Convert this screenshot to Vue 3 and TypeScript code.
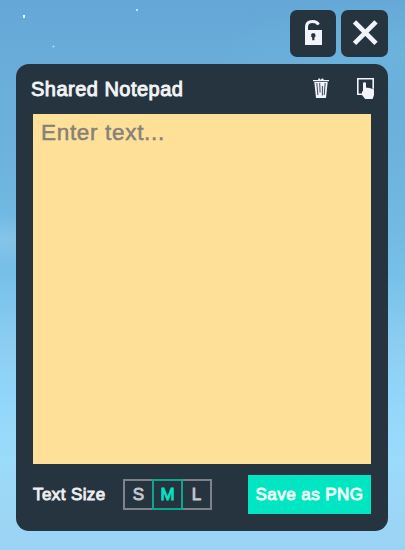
<script setup lang="ts">
import { ref } from 'vue'

type Size = 'S' | 'M' | 'L'

const sizes: Size[] = ['S', 'M', 'L']
const active = ref<Size>('M')
const locked = ref(false)
const note = ref('')
</script>

<template>
  <main class="scene">
    <svg class="stars" width="405" height="64" aria-hidden="true">
      <rect x="23" y="15" width="2" height="3" fill="#e4ffff" />
      <rect x="136" y="9" width="2" height="2" fill="#b5ecf8" />
      <rect x="53" y="46" width="1" height="1" fill="#e4ffff" />
      <path d="M52 46.5h3M53.500 45v3" stroke="#9ddcf2" stroke-opacity=".6" />
    </svg>

    <div class="window-controls">
      <button class="control lock" type="button" aria-label="Lock" @click="locked = !locked">
        <svg width="46" height="47" viewBox="0 0 46 47">
          <path d="M16.500 20.500v-3.500c0-3.600 2.500-5.500 6-5.500 3.200 0 5 1 6 3.200" fill="none" stroke="#f3f3fb" stroke-width="3" />
          <path fill="#f3f3fb" fill-rule="evenodd" d="M15 20h17v15H15zM21.200 24.200v2.600l1 .8v2.700h2.200v-2.700l1-.8v-2.600l-1.100-1h-2z" />
        </svg>
      </button>
      <button class="control close" type="button" aria-label="Close">
        <svg width="47" height="47" viewBox="0 0 47 47">
          <path d="M13.500 11.800l21.500 21.500M35 11.800L13.500 33.300" stroke="#f3f3fb" stroke-width="4.700" />
        </svg>
      </button>
    </div>

    <section class="notepad">
      <header class="header">
        <h1 class="title">Shared Notepad</h1>
        <div class="tools">
          <button class="tool" type="button" aria-label="Clear" @click="note = ''">
            <svg width="18" height="22" viewBox="0 0 18 22">
              <path fill="#f3f3fb" d="M1 2h5l.5-1.500h1.500V1.500h1.500V0.500H11L12 2h5v1.300H1zM2.300 4h13.400L14 20H4z" />
              <path d="M4.800 5l1.100 12M7.700 5l.4 9.500M10.400 8v9.500M13.200 5l-1 12" stroke="#25343e" stroke-width=".9" />
            </svg>
          </button>
          <button class="tool" type="button" aria-label="Select">
            <svg width="18" height="22" viewBox="0 0 18 22">
              <path d="M5 16.200H.8V.8h15.400v10" fill="none" stroke="#f3f3fb" stroke-width="1.600" />
              <path fill="#f3f3fb" d="M6 5.500q0-1.200 1.500-1.200t1.500 1.200v4.300q1-.6 2 .1 1-.4 2 .4 1-.3 2 .6 1.800-.4 2 1v5l-1.400 4.100H8.200L5 17v-3.800l1 .3z" />
            </svg>
          </button>
        </div>
      </header>

      <textarea v-model="note" class="note" placeholder="Enter text..." :readonly="locked"></textarea>

      <footer class="footer">
        <span class="label">Text Size</span>
        <div class="sizes">
          <button
            v-for="size in sizes"
            :key="size"
            type="button"
            class="size"
            :class="{ active: size === active }"
            @click="active = size"
          >{{ size }}</button>
        </div>
        <button class="save" type="button">Save as PNG</button>
      </footer>
    </section>
  </main>
</template>

<style>
body {
  margin: 0;
}
</style>

<style scoped>
.scene {
  position: relative;
  box-sizing: border-box;
  width: 405px;
  height: 550px;
  padding: 10px 17px 19px 16px;
  overflow: hidden;
  display: flex;
  flex-direction: column;
  font-family: "Liberation Sans", Arial, sans-serif;
  background:
    radial-gradient(ellipse 60px 26px at 0 240px, rgba(155, 207, 235, 0.5), transparent),
    radial-gradient(ellipse 190px 55px at 405px 55px, rgba(108, 183, 221, 0.7), transparent),
    linear-gradient(180deg, #65a8d7 0, #69acda 60px, #6fb5e1 190px, #76c0e8 275px, #8bcdf1 340px, #91d6fa 395px, #9bdbfb 460px, #9bd3f4 550px);
}

.stars {
  position: absolute;
  top: 0;
  left: 0;
}

button {
  padding: 0;
  border: 0;
  font-family: inherit;
  background: none;
}

svg {
  display: block;
}

.window-controls {
  position: relative;
  display: flex;
  justify-content: flex-end;
  gap: 5px;
  height: 47px;
  margin-bottom: 7px;
}

.control {
  height: 47px;
  border-radius: 7px;
  background: #25343e;
}

.notepad {
  box-sizing: border-box;
  display: flex;
  flex-direction: column;
  height: 467px;
  padding: 0 17px 17px;
  border-radius: 13px;
  background: #25343e;
}

.header {
  display: flex;
  align-items: center;
  justify-content: space-between;
  height: 50px;
  margin: 0 -4px 0 -2px;
}

.title {
  margin: 0;
  color: #f3f3f5;
  font-size: 20px;
  font-weight: 400;
  line-height: 50px;
  letter-spacing: 0.48px;
  -webkit-text-stroke: 0.95px #f3f3f5;
}

.tools {
  display: flex;
  gap: 27px;
}

.note {
  box-sizing: border-box;
  display: block;
  width: 338px;
  height: 350px;
  padding: 6px 8px;
  border: 0;
  border-radius: 0;
  outline: 0;
  resize: none;
  color: #4f4f4f;
  font-family: inherit;
  font-size: 22.5px;
  line-height: 26px;
  letter-spacing: 0.68px;
  background: #ffe098;
}

.note::placeholder {
  color: #858078;
  opacity: 1;
  -webkit-text-stroke: 0.5px #858078;
}

.footer {
  display: flex;
  align-items: center;
  height: 39px;
  margin-top: 11px;
}

.label {
  width: 90px;
  color: #eeeef0;
  font-size: 17px;
  letter-spacing: 0.4px;
  -webkit-text-stroke: 0.9px #eeeef0;
}

.sizes {
  display: flex;
}

.size {
  box-sizing: border-box;
  width: 31px;
  height: 31px;
  margin-right: -2px;
  border: 2px solid #7f828b;
  color: #c4c7cd;
  font-size: 17px;
  line-height: 27px;
  -webkit-text-stroke: 0.9px currentColor;
}

.size.active {
  position: relative;
  border-color: #0fa58f;
  color: #00e6c5;
}

.save {
  width: 123px;
  height: 39px;
  margin-left: auto;
  color: #f0fff9;
  font-size: 17px;
  letter-spacing: 0.45px;
  white-space: nowrap;
  background: #00e6c3;
  -webkit-text-stroke: 0.9px #f0fff9;
}
</style>
